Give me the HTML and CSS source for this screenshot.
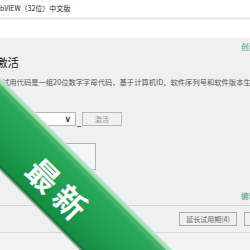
FILE: index.html
```html
<!DOCTYPE html>
<html lang="zh-CN">
<head>
  <meta charset="UTF-8" />
  <title>激活</title>
  <link rel="stylesheet" href="styles.css">
</head>
<body>
  <div class="titlebar">bVIEW（32位）中文版</div>
  <div class="toolbar"></div>

  <div class="content">
    <div class="link-row"><a href="#">创建</a></div>
    <h2>激活</h2>
    <p class="desc">试用代码是一组20位数字字母代码，基于计算机ID、软件序列号和软件版本生成。</p>

    <div class="form-row">
      <div class="select"><span class="chev">v</span></div>
      <span class="mark"></span>
      <button class="btn" disabled>激活</button>
    </div>

    <div class="codebox"></div>

    <div class="link-row edit"><a href="#">编辑</a></div>

    <div class="footer">
      <button class="btn">延长试用期(4)</button>
      <button class="btn"></button>
    </div>
    <div class="bottom"></div>
  </div>

  <div class="ribbon"><span>最新</span></div>
</body>
</html>
```

FILE: styles.css
```css
* {
  box-sizing: border-box;
  margin: 0;
  padding: 0;
}

html, body {
  width: 250px;
  height: 250px;
  overflow: hidden;
}

body {
  position: relative;
  background: #f0f0f0;
  font-family: "Noto Sans CJK SC", "Noto Sans", sans-serif;
  color: #333;
}

.titlebar {
  height: 17px;
  background: #fff;
  font-size: 7px;
  line-height: 16px;
  color: #222;
  white-space: nowrap;
}

.toolbar {
  height: 21px;
  background: #fff;
  border-top: 3px solid #ebebeb;
}

.content {
  display: flex;
  flex-direction: column;
}

.link-row {
  display: flex;
  justify-content: flex-end;
  height: 12px;
  margin-top: 3px;
  margin-right: -6px;
}

.link-row a {
  font-size: 7.5px;
  line-height: 12px;
  color: #3aa07a;
  text-decoration: none;
}

h2 {
  margin-left: -4px;
  margin-top: 0;
  font-size: 11.5px;
  font-weight: normal;
  line-height: 18px;
  color: #222;
}

.desc {
  margin-top: 5px;
  margin-left: 2px;
  font-size: 7.3px;
  line-height: 12px;
  color: #555;
  white-space: nowrap;
}

.form-row {
  display: flex;
  align-items: flex-end;
  margin-top: 24px;
}

.select {
  width: 78px;
  height: 14px;
  margin-left: -2px;
  background: #fff;
  border: 1px solid #b5b5b5;
  display: flex;
  justify-content: flex-end;
  padding-right: 5px;
}

.chev {
  font-size: 8px;
  font-weight: bold;
  line-height: 12px;
  color: #222;
}

.mark {
  width: 4px;
  height: 1px;
  background: #d04040;
  margin-left: 1px;
  margin-bottom: -1px;
}

.btn {
  height: 14px;
  width: 40px;
  margin-left: 1px;
  background: #f0f0f0;
  border: 1px solid #b8b8b8;
  font-family: inherit;
  font-size: 7px;
  line-height: 12px;
  color: #999;
}

.codebox {
  width: 76px;
  height: 27px;
  margin-top: 17px;
  margin-left: 20px;
  background: #f6f6f6;
  border: 1px solid #a9b8b3;
  border-left: none;
}

.edit {
  margin-top: 20px;
}

.footer {
  display: flex;
  justify-content: flex-end;
  gap: 6px;
  margin-top: 3px;
  margin-right: -20px;
  padding: 6px 0;
  border-top: 1px solid #d8d8d8;
  border-bottom: 1px solid #d8d8d8;
}

.footer .btn {
  width: 58px;
  color: #666;
  border-color: #ababab;
}

.footer .btn:last-child {
  width: 26px;
}

.bottom {
  height: 20px;
  background: #f3f3f3;
}

.ribbon {
  position: absolute;
  left: -140px;
  top: 151px;
  width: 400px;
  height: 66px;
  transform: rotate(45deg);
  background: linear-gradient(to bottom,
    #c4ebd1 0px, #98d9ae 4px, #4fb873 5px, #2aa85a 12px,
    #1d9c4d 40px, #158c42 61px, #0e6e33 63px, #b9c7bd 66px);
  display: flex;
  justify-content: center;
  align-items: center;
}

.ribbon span {
  margin-left: 8px;
  margin-top: 8px;
  font-size: 32px;
  font-weight: bold;
  letter-spacing: 6px;
  color: #fff;
  line-height: 40px;
}
```
